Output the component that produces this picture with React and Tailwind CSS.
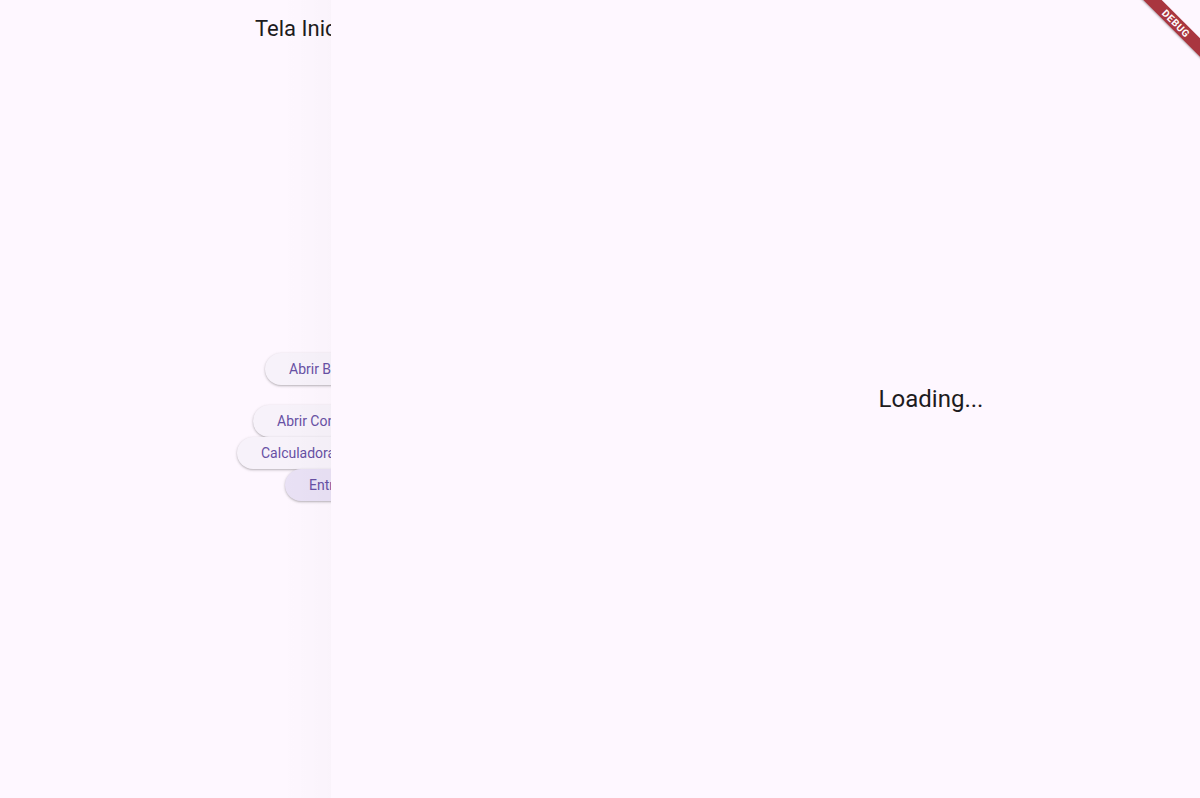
const buttons = [
  { label: 'Abrir Bloco de Notas', left: 'ml-[265px]', top: 'mt-[297px]', bg: 'bg-[#f7f2fa]' },
  { label: 'Abrir Contador', left: 'ml-[253px]', top: 'mt-[20px]', bg: 'bg-[#f7f2fa]' },
  { label: 'Calculadora IMC', left: 'ml-[237px]', top: 'mt-0', bg: 'bg-[#f7f2fa]' },
  { label: 'Entrar', left: 'ml-[285px]', top: 'mt-0', bg: 'bg-[#e9e1f5]' },
];

const App = () => {
  return (
    <div
      className="relative w-[1200px] h-[798px] overflow-hidden bg-[#fef7ff] flex"
      style={{ fontFamily: 'Roboto, "Noto Sans", sans-serif' }}
    >
      {/* old page, pushed left by the route transition */}
      <div className="relative w-[331px] h-full shrink-0 overflow-hidden bg-[#fef7ff]">
        <div className="h-[56px] flex items-center pl-[255px] whitespace-nowrap text-[22px] text-[#1d1b20]">
          Tela Inicial
        </div>
        <div className="flex flex-col items-start">
          {buttons.map((b) => (
            <button
              key={b.label}
              className={`${b.left} ${b.top} ${b.bg} h-[32px] rounded-full pl-[24px] pr-[24px] whitespace-nowrap text-[14px] font-normal text-[#6750a4] shadow-[0_1px_2px_rgba(0,0,0,0.22),0_1px_3px_1px_rgba(0,0,0,0.06)]`}
            >
              {b.label}
            </button>
          ))}
        </div>
        <div className="absolute inset-y-0 right-0 w-[50px] bg-gradient-to-r from-transparent to-black/[0.015] pointer-events-none" />
      </div>

      {/* new page sliding in */}
      <div className="w-[1200px] h-full shrink-0 bg-[#fef7ff] flex items-center justify-center">
        <span className="text-[24px] text-[#1d1b20]">Loading...</span>
      </div>

      {/* debug banner */}
      <div className="absolute left-[1116px] top-[17px] w-[120px] h-[13px] rotate-45 bg-[#a9363f] flex items-center justify-center shadow-[0_1px_2px_rgba(0,0,0,0.3)]">
        <span className="text-[10px] font-bold leading-none tracking-[0.5px] text-white">DEBUG</span>
      </div>
    </div>
  );
};

export default App;
